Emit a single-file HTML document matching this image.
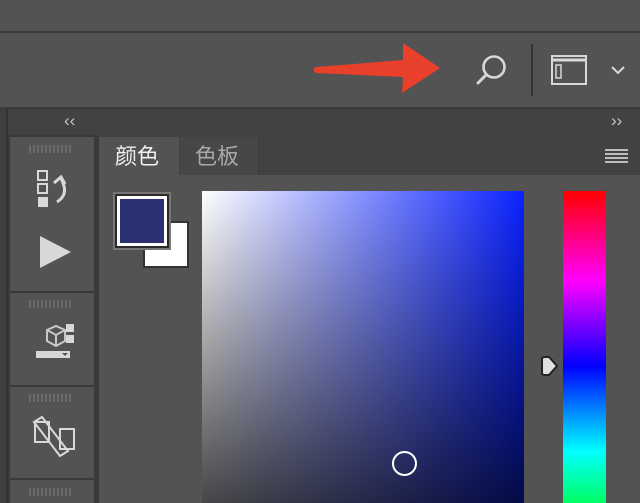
<!DOCTYPE html>
<html><head><meta charset="utf-8"><style>
*{margin:0;padding:0;box-sizing:border-box}
body{width:640px;height:503px;overflow:hidden;background:#535353;position:relative;font-family:"Liberation Sans","Noto Sans CJK SC",sans-serif}
.a{position:absolute}
.grip{position:absolute;left:29px;width:44px;height:8px;background:repeating-linear-gradient(90deg,#6a6a6a 0 2px,transparent 2px 4px)}
</style></head><body>
<div class="a" style="left:0;top:0;width:640px;height:31px;background:#535353"></div>
<div class="a" style="left:0;top:31px;width:640px;height:2px;background:#3c3c3c"></div>
<svg class="a" style="left:0;top:33px" width="640" height="75">
<path d="M316 34 Q311 37 316 40 L403 44 L402 60 L440 35 L403 10 L403 27 Z" fill="#e8402a"/>
<circle cx="494" cy="34" r="10.5" fill="none" stroke="#d8d8d8" stroke-width="2.6"/>
<line x1="486" y1="42" x2="478" y2="50" stroke="#d8d8d8" stroke-width="3" stroke-linecap="round"/>
<line x1="532" y1="11" x2="532" y2="63" stroke="#333" stroke-width="2"/>
<rect x="552" y="23" width="34" height="28" fill="none" stroke="#d8d8d8" stroke-width="2"/>
<line x1="552" y1="27" x2="586" y2="27" stroke="#d8d8d8" stroke-width="3"/>
<rect x="556" y="32" width="5" height="13" fill="none" stroke="#d8d8d8" stroke-width="1.5"/>
<path d="M612 34 L618 40 L624 34" fill="none" stroke="#d8d8d8" stroke-width="2"/>
</svg>
<div class="a" style="left:0;top:107px;width:640px;height:2px;background:#3a3a3a"></div>
<div class="a" style="left:0;top:109px;width:640px;height:26px;background:#424242"></div>
<div class="a" style="left:64px;top:111px;color:#c8c8c8;font-size:17px;letter-spacing:0px">‹‹</div>
<div class="a" style="left:611px;top:111px;color:#c8c8c8;font-size:17px;letter-spacing:0px">››</div>
<div class="a" style="left:0;top:109px;width:8px;height:394px;background:#3e3e3e;border-right:2px solid #333"></div>
<div class="a" style="left:8px;top:135px;width:2px;height:368px;background:#3a3a3a"></div>
<div class="a" style="left:94px;top:135px;width:5px;height:368px;background:#3a3a3a"></div>
<div class="a" style="left:8px;top:135px;width:88px;height:2px;background:#3a3a3a"></div>
<div class="a" style="left:8px;top:291px;width:88px;height:2px;background:#3a3a3a"></div>
<div class="a" style="left:8px;top:385px;width:88px;height:2px;background:#3a3a3a"></div>
<div class="a" style="left:8px;top:478px;width:88px;height:2px;background:#3a3a3a"></div>
<div class="grip" style="top:145px"></div><div class="grip" style="top:300px"></div><div class="grip" style="top:394px"></div><div class="grip" style="top:488px"></div>
<svg class="a" style="left:10px;top:137px" width="84" height="366">
<rect x="28" y="34" width="9" height="9" fill="none" stroke="#d8d8d8" stroke-width="2"/>
<rect x="28" y="47" width="9" height="9" fill="none" stroke="#d8d8d8" stroke-width="2"/>
<rect x="28" y="60" width="10" height="10" fill="#d8d8d8"/>
<path d="M47 65 Q58 58 53 46 L51 41 M44 46 L51 40 L55 47" fill="none" stroke="#d8d8d8" stroke-width="3"/>
<path d="M30 99 L61 115 L30 131 Z" fill="#d8d8d8"/>
<path d="M37 193 L46 189 L55 193 L55 204 L46 209 L37 204 Z M37 193 L46 198 L55 193 M46 198 L46 209" fill="none" stroke="#c8c8c8" stroke-width="2"/>
<rect x="56" y="187" width="8" height="8" fill="#d8d8d8"/><rect x="56" y="198" width="8" height="8" fill="#d8d8d8"/>
<rect x="26" y="214" width="34" height="7" fill="#d8d8d8"/><path d="M52 216 L58 216 L55 219Z" fill="#535353"/>
<path d="M24 285 L32 280 L58 314 L50 319 Z" fill="none" stroke="#d8d8d8" stroke-width="2"/>
<rect x="25" y="285" width="14" height="20" fill="none" stroke="#d8d8d8" stroke-width="2"/>
<rect x="50" y="292" width="14" height="20" fill="none" stroke="#d8d8d8" stroke-width="2"/>
</svg>
<div class="a" style="left:99px;top:135px;width:541px;height:40px;background:#424242"></div>
<div class="a" style="left:99px;top:137px;width:80px;height:40px;background:#535353;color:#f0f0f0;font-size:22px;line-height:40px;padding-left:16px">颜色</div>
<div class="a" style="left:180px;top:137px;width:79px;height:38px;background:#474747;border-right:1px solid #3a3a3a;color:#a8a8a8;font-size:22px;line-height:40px;padding-left:15px">色板</div>
<div class="a" style="left:605px;top:149px;width:23px;height:14px;background:repeating-linear-gradient(180deg,#bdbdbd 0 2px,transparent 2px 4px)"></div>
<div class="a" style="left:143px;top:221px;width:46px;height:47px;background:#fff;border:2px solid #333"></div>
<div class="a" style="left:117px;top:196px;width:50px;height:50px;background:#2b3170;border:3px solid #fff;outline:2px solid #2a2a2a;box-shadow:0 0 0 4px #777"></div>
<div class="a" style="left:202px;top:191px;width:322px;height:312px;background:linear-gradient(180deg,rgba(0,0,0,0) 0%,rgba(0,0,0,0.72) 100%),linear-gradient(90deg,#fff 0%,#0a22ff 100%)"></div>
<div class="a" style="left:392px;top:451px;width:25px;height:25px;border:2px solid #fff;border-radius:50%"></div>
<div class="a" style="left:563px;top:191px;width:43px;height:312px;background:linear-gradient(180deg,#f00 0px,#f0f 90px,#00f 175px,#0ff 260px,#0f0 345px)"></div>
<svg class="a" style="left:539px;top:355px" width="22" height="22"><path d="M3 4 Q3 2 6 2 L10 2 L18 11 L10 20 L6 20 Q3 20 3 18 Z" fill="#e0e0e0" stroke="#222" stroke-width="2"/></svg>
</body></html>
